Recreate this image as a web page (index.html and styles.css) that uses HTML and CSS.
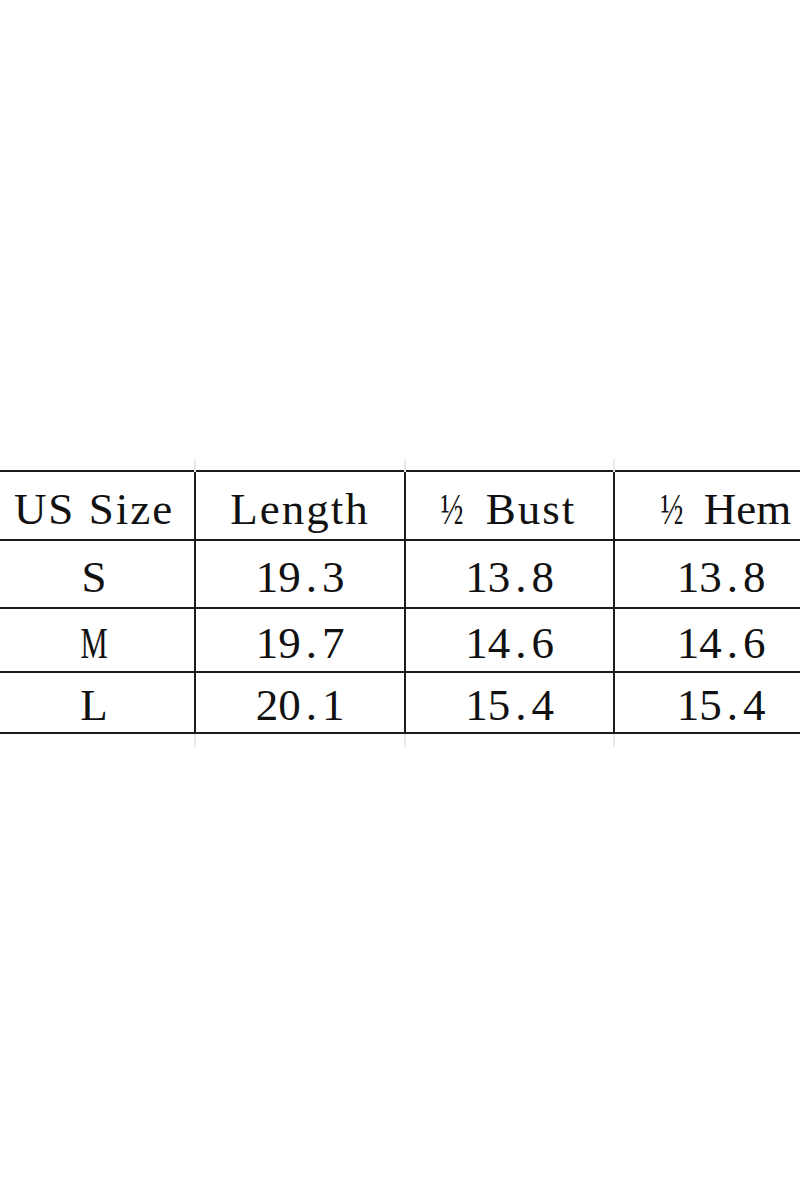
FILE: index.html
```html
<!DOCTYPE html>
<html>
<head>
<meta charset="utf-8">
<link rel="stylesheet" href="styles.css">
</head>
<body>
<div class="page">
  <table class="sizes">
    <colgroup>
      <col class="c1"><col class="c2"><col class="c3"><col class="c4">
    </colgroup>
    <tr class="spacer top"><td></td><td></td><td></td><td></td></tr>
    <tr class="head"><td>US Size</td><td>Length</td><td><span class="half">½</span> Bust</td><td class="tight"><span class="half">½</span> Hem</td></tr>
    <tr class="r1"><td>S</td><td>19<span class="dot">.</span>3</td><td>13<span class="dot">.</span>8</td><td>13<span class="dot">.</span>8</td></tr>
    <tr class="r2"><td><span class="narrow">M</span></td><td>19<span class="dot">.</span>7</td><td>14<span class="dot">.</span>6</td><td>14<span class="dot">.</span>6</td></tr>
    <tr class="r3"><td>L</td><td>20<span class="dot">.</span>1</td><td>15<span class="dot">.</span>4</td><td>15<span class="dot">.</span>4</td></tr>
    <tr class="spacer bottom"><td></td><td></td><td></td><td></td></tr>
  </table>
</div>
</body>
</html>
```
FILE: styles.css
```css
html, body {
  margin: 0;
  padding: 0;
  background: #ffffff;
}
.page {
  width: 800px;
  height: 1200px;
  overflow: hidden;
  padding-top: 459px;
  box-sizing: border-box;
}
.sizes {
  border-collapse: collapse;
  table-layout: fixed;
  width: 835px;
  margin-left: -8px;
  font-family: "Liberation Serif", "Times New Roman", serif;
  font-size: 45px;
  color: #111;
}
.c1 { width: 202px; }
.c2 { width: 210px; }
.c3 { width: 209px; }
.c4 { width: 214px; }
.sizes td {
  padding: 6px 0 0 0;
  text-align: center;
  border: 2px solid #1c1c1c;
  line-height: 1;
  vertical-align: middle;
}
.head td {
  letter-spacing: 2px;
  padding-top: 8px;
}
.head td.tight {
  letter-spacing: 0;
  padding-left: 12px;
}
.spacer td {
  padding: 0;
  border-top: none;
  border-bottom: none;
  border-left: 2px solid #e9e9e9;
  border-right: 2px solid #e9e9e9;
}
.spacer td:first-child { border-left: none; }
.spacer.top { height: 12px; }
.spacer.bottom { height: 14px; }
.head { height: 69px; }
.r1 { height: 68px; }
.r2 { height: 64px; }
.r3 { height: 61px; }
.half {
  display: inline-block;
  letter-spacing: 0;
  transform: scaleX(0.68);
  margin: 0 4px 0 -8px;
}
.narrow {
  display: inline-block;
  transform: scaleX(0.68);
}
.dot {
  padding: 0 5px;
}
```
